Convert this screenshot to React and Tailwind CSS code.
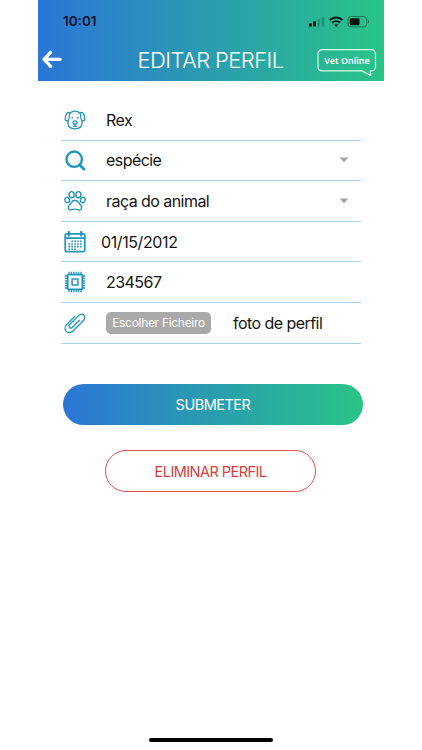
import React, { useState } from "react";

const stroke = {
    fill: "none",
    stroke: "#2196bd",
    strokeWidth: 1.3,
    strokeLinecap: "round",
    strokeLinejoin: "round",
};

function DogIcon() {
    return (
        <svg viewBox="0 0 22 22" className="w-[22px] h-[22px]" {...stroke}>
            <path d="M6 4.1C7.4 2.7 9 2.2 11 2.2s3.6.5 5 1.9" />
            <path d="M6 4.1C4.4 2.7 2.6 3.7 1.9 6.2 1.4 8.1.9 9.6 1.2 10.7c.4 1.4 2.7 1.5 3.5-.3C5.5 8.5 5.1 6.3 6 4.1z" />
            <path d="M16 4.1c1.6-1.4 3.4-.4 4.1 2.1.5 1.9 1 3.4.7 4.5-.4 1.4-2.7 1.5-3.5-.3-.8-1.9-.4-4.1-1.3-6.3z" />
            <path d="M4.1 11.8c-.4 2.3-.2 4.2.8 5.6 1.3 1.9 3.500 2.400 6.100 2.400s4.800-.5 6.100-2.400c1-1.400 1.200-3.300.8-5.600" />
            <path d="M9 13.200c0-.9.9-1.300 2-1.300s2 .4 2 1.300-.9 1.900-2 1.900-2-1-2-1.900zM11 15v2M9.600 17.300h2.800" />
            <path d="M8.200 8.500v.5M13.800 8.500v.5" strokeWidth="1.600" />
        </svg>
    );
}

function SearchIcon() {
    return (
        <svg viewBox="0 0 22 22" className="w-[22px] h-[22px]" {...stroke} strokeWidth="2.4">
            <circle cx="10.2" cy="10.2" r="7.7" />
            <path d="M15.8 16l4.300 4.200" strokeWidth="2.700" />
        </svg>
    );
}

function PawIcon() {
    return (
        <svg viewBox="0 0 22 22" className="w-[22px] h-[22px]" {...stroke} strokeWidth="1.4">
            <ellipse cx="7.600" cy="4.700" rx="2.500" ry="3.100" transform="rotate(-8 7.600 4.700)" />
            <ellipse cx="14.400" cy="4.700" rx="2.500" ry="3.100" transform="rotate(8 14.400 4.700)" />
            <ellipse cx="3.200" cy="10" rx="2.200" ry="2.700" transform="rotate(-25 3.200 10)" />
            <ellipse cx="18.800" cy="10" rx="2.200" ry="2.700" transform="rotate(25 18.800 10)" />
            <path d="M11 10.200c-2.800 0-3.600 2.300-4.900 4-1.300 1.600-2.300 2.600-1.600 4.300.7 1.600 2.400 1.700 3.700 1.200 1.800-.7 3.800-.7 5.600 0 1.300.5 3 .4 3.700-1.200.7-1.700-.3-2.700-1.600-4.300-1.300-1.700-2.100-4-4.900-4z" />
        </svg>
    );
}

function CalendarIcon() {
    return (
        <svg viewBox="0 0 22 22" className="w-[22px] h-[22px]" {...stroke}>
            <rect x="1.200" y="2.800" width="19.600" height="17.800" rx="1.500" strokeWidth="1.700" />
            <path d="M1.500 7.200h19" strokeWidth="1.800" />
            <path d="M4.800 1v3.600M17.200 1v3.600" strokeWidth="2.200" />
            <path
                d="M7.400 10.300h10.600M4.400 13h13.600M4.400 15.600h13.600M4.400 18.200h9"
                strokeWidth="1.600"
                strokeDasharray="1.700 1.200"
                strokeLinecap="butt"
            />
        </svg>
    );
}

function ChipIcon() {
    return (
        <svg viewBox="0 0 22 22" className="w-[22px] h-[22px]" {...stroke}>
            <rect x="3.600" y="3.600" width="14.800" height="14.800" rx=".8" strokeWidth="1.900" />
            <rect x="8.100" y="8.100" width="5.800" height="5.800" strokeWidth="1.500" />
            <path
                d="M5 .8v2.500M7.400.8v2.500M9.800.8v2.500M12.200.8v2.500M14.600.8v2.500M17 .8v2.500M5 18.700v2.500M7.400 18.700v2.500M9.800 18.700v2.500M12.200 18.700v2.500M14.600 18.700v2.500M17 18.700v2.500M.8 5h2.500M.8 7.400h2.500M.8 9.800h2.500M.8 12.200h2.500M.8 14.600h2.500M.8 17h2.500M18.700 5h2.500M18.700 7.400h2.500M18.700 9.800h2.500M18.700 12.200h2.500M18.700 14.600h2.500M18.700 17h2.500"
                strokeWidth="1.300"
                strokeLinecap="butt"
            />
        </svg>
    );
}

function ClipIcon() {
    return (
        <svg viewBox="0 0 22 22" className="w-[22px] h-[22px]" {...stroke}>
            <path d="M15.500 8.300l-7 7c-.9.900-2.200 1-3 .2-.8-.8-.7-2.100.2-3l8.900-8.900c1.600-1.600 3.900-1.800 5.300-.4s1.200 3.700-.4 5.300L9.300 18.700c-2.200 2.200-5.300 2.500-7.100.7S.7 14.500 2.900 12.300l7.800-7.800" />
        </svg>
    );
}

function StatusIcons() {
    return (
        <svg viewBox="0 0 62 14" className="w-[62px] h-[14px]">
            <g fill="#04140f">
                <rect x="0" y="8.200" width="2.800" height="3.300" rx=".6" />
                <rect x="4.200" y="6.200" width="2.800" height="5.300" rx=".6" />
                <rect x="8.500" y="3.800" width="2.600" height="7.700" rx=".6" opacity=".22" />
                <rect x="12.700" y="1.600" width="2.600" height="9.900" rx=".6" opacity=".22" />
                <rect x="40.700" y="3.300" width="9.800" height="6.900" rx="1.200" />
            </g>
            <g fill="none" stroke="#04140f" strokeWidth="2">
                <path d="M20.800 5c3.400-3.400 9.100-3.400 12.600 0" />
                <path d="M23.200 7.700c2.300-2.100 5.500-2.100 7.800 0" />
            </g>
            <path d="M27.100 11.900l-2-2.100c1.100-.9 2.900-.9 4 0z" fill="#04140f" />
            <rect x="39" y="1.600" width="18.700" height="10.300" rx="2.900" fill="none" stroke="#04140f" strokeWidth="1" opacity=".42" />
            <path d="M59 5c1.300.5 1.300 3 0 3.500z" fill="#04140f" opacity=".5" />
        </svg>
    );
}

function VetOnline() {
    return (
        <button className="relative w-[60px] h-[29px] mt-[48px]">
            <svg viewBox="0 0 60 29" className="absolute inset-0 w-[60px] h-[29px]">
                <path
                    d="M5 1.700h49.500a4 4 0 0 1 4 4v13.200a4 4 0 0 1-4 4h-1.200l.3 4.600-8.600-4.600H5a4 4 0 0 1-4-4V5.700a4 4 0 0 1 4-4z"
                    fill="none"
                    stroke="#d6fbea"
                    strokeWidth="1.200"
                    strokeLinejoin="round"
                />
            </svg>
            <span className="absolute left-0 top-[6px] w-full text-center font-['Noto_Sans',sans-serif] text-[9px] leading-[13px] font-semibold text-white">
                Vet Online
            </span>
        </button>
    );
}

function Row({ icon, arrow, className = "pl-[20px]", children }) {
    return (
        <div className="flex items-center h-[40.6px] border-b border-[#a9d3e8] pl-[3px]">
            <div className="shrink-0">{icon}</div>
            <div className={`flex-1 flex items-center ${className}`}>{children}</div>
            {arrow && (
                <svg viewBox="0 0 10 6" className="w-[10px] h-[6px] mr-[12px]">
                    <path d="M.5.5h9L5 5.2z" fill="#a6a6a6" />
                </svg>
            )}
        </div>
    );
}

export default function App() {
    const [pet] = useState({
        name: "Rex",
        birth: "01/15/2012",
        chip: "234567",
    });

    return (
        <div className="h-[750px] w-full overflow-hidden bg-white font-['Inter',sans-serif] text-[#151515]">
            <div className="ml-[38px] w-[346px] h-full flex flex-col">
                {/* HEADER */}
                <header className="h-[81px] shrink-0 bg-linear-to-r/srgb from-[#2b76d6] to-[#29c487]">
                    <div className="flex h-[43px] items-center justify-between pl-[25px] pr-[13px]">
                        <span className="text-[13.5px] font-semibold text-[#06122b]">10:01</span>
                        <StatusIcons />
                    </div>
                    <div className="-mt-[43px] flex h-[81px] justify-between pl-[4px] pr-[7px]">
                        <button className="mt-[50px] h-[18px] w-[20px]">
                            <svg viewBox="0 0 20 18" className="w-[20px] h-[18px]">
                                <path d="M8.6 2.3L2 9.300l6.600 7M2.500 9.300h15.700" fill="none" stroke="#fff" strokeWidth="3.200" strokeLinecap="round" strokeLinejoin="round" />
                            </svg>
                        </button>
                        <h1 className="mt-[45px] ml-[42px] whitespace-nowrap text-[22px] leading-[30px] font-light tracking-[-0.6px] text-white">
                            EDITAR PERFIL
                        </h1>
                        <VetOnline />
                    </div>
                </header>

                {/* FORM */}
                <main className="flex flex-col pt-[19px]">
                    <div className="ml-[23px] w-[300px] text-[16px] tracking-[-0.55px]">
                        <Row icon={<DogIcon />}>{pet.name}</Row>
                        <Row icon={<SearchIcon />} arrow>espécie</Row>
                        <Row icon={<PawIcon />} arrow>raça do animal</Row>
                        <Row icon={<CalendarIcon />} className="pl-[15px] tracking-[-0.4px]">{pet.birth}</Row>
                        <Row icon={<ChipIcon />}>{pet.chip}</Row>
                        <Row icon={<ClipIcon />}>
                            <button className="h-[22px] w-[105px] shrink-0 whitespace-nowrap rounded-[5px] bg-[#a9a9a9] text-[12px] tracking-[-0.3px] text-white">
                                Escolher Ficheiro
                            </button>
                            <span className="ml-[22px] whitespace-nowrap">foto de perfil</span>
                        </Row>
                    </div>

                    <button className="ml-[25px] mt-[40px] h-[41px] w-[300px] rounded-full bg-linear-to-r/srgb from-[#2b76d6] to-[#29c487] pt-[2px] text-[14.5px] tracking-[-0.5px] text-white">
                        SUBMETER
                    </button>
                    <button className="ml-[67px] mt-[25px] h-[42px] w-[211px] rounded-full border border-[#e2504f] pt-[2px] text-[14.5px] tracking-[-0.55px] text-[#dc3b3b]">
                        ELIMINAR PERFIL
                    </button>
                </main>

                {/* HOME INDICATOR */}
                <div className="mx-auto mt-auto mb-[8px] h-[4px] w-[124px] rounded-full bg-black" />
            </div>
        </div>
    );
}
